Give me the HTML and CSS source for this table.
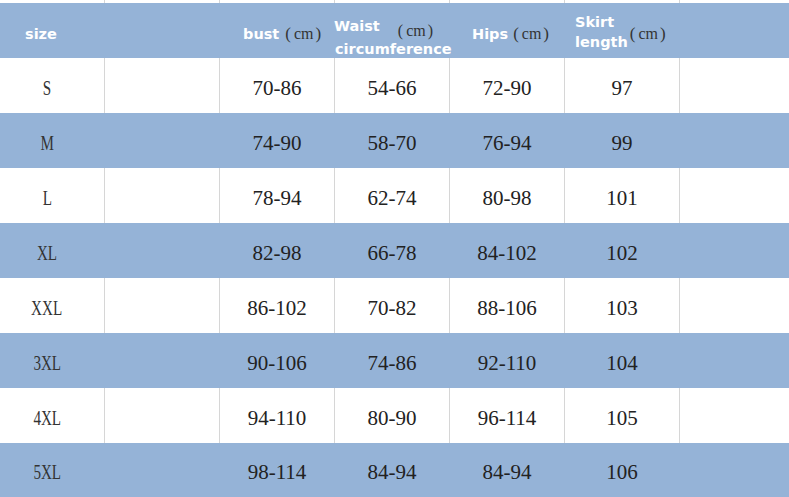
FILE: index.html
```html
<!DOCTYPE html>
<html>
<head>
<meta charset="utf-8">
<link rel="stylesheet" href="styles.css">
</head>
<body>
<div class="sheet">
  <div class="row strip">
    <div class="cell"></div><div class="cell"></div><div class="cell"></div><div class="cell"></div><div class="cell"></div><div class="cell"></div><div class="cell"></div>
  </div>
  <div class="row head">
    <div class="cell h-size"><span class="hd">size</span></div>
    <div class="cell"></div>
    <div class="cell h-bust"><span class="hd">bust</span><span class="cm"><span class="pl">(</span>cm<span class="pr">)</span></span></div>
    <div class="cell h-waist">
      <div class="line1"><span class="hd">Waist</span><span class="cm"><span class="pl">(</span>cm<span class="pr">)</span></span></div>
      <div class="line2"><span class="hd">circumference</span></div>
    </div>
    <div class="cell h-hips"><span class="hd">Hips</span><span class="cm"><span class="pl">(</span>cm<span class="pr">)</span></span></div>
    <div class="cell h-skirt">
      <div class="stack"><span class="hd">Skirt</span><span class="hd">length</span></div>
      <span class="cm"><span class="pl">(</span>cm<span class="pr">)</span></span>
    </div>
    <div class="cell"></div>
  </div>
  <div class="row white"><div class="cell sz"><span>S</span></div><div class="cell"></div><div class="cell">70-86</div><div class="cell">54-66</div><div class="cell">72-90</div><div class="cell">97</div><div class="cell"></div></div>
  <div class="row blue"><div class="cell sz"><span>M</span></div><div class="cell"></div><div class="cell">74-90</div><div class="cell">58-70</div><div class="cell">76-94</div><div class="cell">99</div><div class="cell"></div></div>
  <div class="row white"><div class="cell sz"><span>L</span></div><div class="cell"></div><div class="cell">78-94</div><div class="cell">62-74</div><div class="cell">80-98</div><div class="cell">101</div><div class="cell"></div></div>
  <div class="row blue"><div class="cell sz"><span>XL</span></div><div class="cell"></div><div class="cell">82-98</div><div class="cell">66-78</div><div class="cell">84-102</div><div class="cell">102</div><div class="cell"></div></div>
  <div class="row white"><div class="cell sz"><span>XXL</span></div><div class="cell"></div><div class="cell">86-102</div><div class="cell">70-82</div><div class="cell">88-106</div><div class="cell">103</div><div class="cell"></div></div>
  <div class="row blue"><div class="cell sz"><span>3XL</span></div><div class="cell"></div><div class="cell">90-106</div><div class="cell">74-86</div><div class="cell">92-110</div><div class="cell">104</div><div class="cell"></div></div>
  <div class="row white"><div class="cell sz"><span>4XL</span></div><div class="cell"></div><div class="cell">94-110</div><div class="cell">80-90</div><div class="cell">96-114</div><div class="cell">105</div><div class="cell"></div></div>
  <div class="row blue last"><div class="cell sz"><span>5XL</span></div><div class="cell"></div><div class="cell">98-114</div><div class="cell">84-94</div><div class="cell">84-94</div><div class="cell">106</div><div class="cell"></div></div>
</div>
</body>
</html>
```
FILE: styles.css
```css
html, body {
  margin: 0;
  padding: 0;
  background: #ffffff;
}
.sheet {
  width: 789px;
  height: 497px;
  overflow: hidden;
  font-family: "Liberation Serif", "DejaVu Serif", serif;
  color: #222;
}
.row {
  display: grid;
  grid-template-columns: 104px 115px 115px 115px 115px 115px 1fr;
  height: 55px;
}
.row.strip { height: 3px; }
.row.last { height: 54px; }
.cell {
  box-sizing: border-box;
  display: flex;
  align-items: center;
  justify-content: center;
  font-size: 21px;
  padding-top: 5px;
  min-width: 0;
}
.row .cell + .cell { border-left: 1px solid #d6d6d6; }
.row.strip .cell { padding: 0; }
.white { background: #ffffff; }
.blue { background: #95b3d7; }
.blue .cell + .cell, .head .cell + .cell { border-left-color: transparent; }
.head { background: #95b3d7; }
.sz { padding-right: 10px; }
.sz span { display: inline-block; transform: scaleX(0.72); color: #333; }

.head .cell {
  justify-content: flex-start;
  padding-top: 6px;
  font-size: 15px;
  white-space: nowrap;
}
.hd {
  font-family: "DejaVu Sans", sans-serif;
  font-weight: bold;
  font-size: 14.5px;
  color: #ffffff;
}
.cm {
  display: inline-flex;
  align-items: center;
  font-family: "Liberation Serif", serif;
  font-size: 16px;
  color: #333;
  margin-left: 6px;
  margin-top: 1px;
}
.pl, .pr { font-size: 17px; display: inline-block; }
.pl { margin-right: 3px; }
.pr { margin-left: 2px; }
.h-size { padding-left: 25px; }
.h-bust { padding-left: 23px; }
.h-hips { padding-left: 22px; }
.h-hips .cm { margin-left: 5px; }
.head .cell.h-waist {
  flex-direction: column;
  align-items: flex-start;
  justify-content: flex-start;
  padding-left: 0;
  padding-top: 14px;
  line-height: 18px;
}
.h-waist .line1 { display: flex; align-items: flex-start; height: 24px; }
.h-waist .line1 .hd { margin-left: -1px; }
.h-waist .line1 .cm { margin-left: 18px; margin-top: 7px; line-height: 14px; }
.h-waist .line1 .pl, .h-waist .line1 .pr { font-size: 16px; }
.h-waist .line2 { line-height: 16px; }
.head .cell.h-skirt { padding-left: 10px; padding-top: 0; }
.stack {
  display: flex;
  flex-direction: column;
  line-height: 20px;
  margin-top: 2px;
}
.h-skirt .cm { margin-left: 2px; margin-top: 6px; }
```
